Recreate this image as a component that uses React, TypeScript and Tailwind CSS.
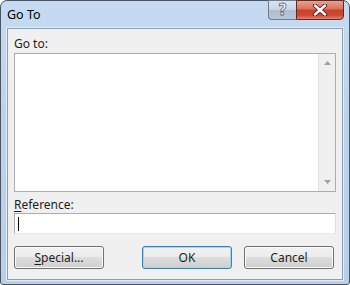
import React from "react";

const font = { fontFamily: '"Noto Sans", "Open Sans", "Liberation Sans", sans-serif' };

function WinButton({ children, isDefault = false, className = "" }: { children: React.ReactNode; isDefault?: boolean; className?: string }) {
  return (
    <div
      className={`h-[23px] rounded-[3px] border flex items-center justify-center text-[12px] text-[#1e1e1e] ${
        isDefault ? "border-[#3c7fb1] shadow-[inset_0_0_0_1px_#9fd9f3]" : "border-[#707070] shadow-[inset_0_0_0_1px_#fbfbfb]"
      } bg-[linear-gradient(to_bottom,#f2f2f2_0%,#ebebeb_50%,#dddddd_50%,#cfcfcf_100%)] ${className}`}
    >
      {children}
    </div>
  );
}

export default function App() {
  return (
    <div style={font} className="w-[350px] h-[285px] bg-white">
      <div className="w-[350px] h-[285px] rounded-t-[7px] rounded-b-[3px] border border-[#4a5564] bg-[linear-gradient(to_bottom,#c6dbf1_0%,#bcd3ec_40%,#b7cfe9_100%)] flex flex-col">
        {/* Title bar */}
        <div className="h-[27px] flex items-start relative shrink-0">
          <div className="pl-[6px] pt-[6px] text-[12.5px] text-black leading-[16px]">Go To</div>
          <div className="absolute right-[5px] top-[-1px] flex">
            <div className="w-[28px] h-[20px] rounded-bl-[4px] border border-[#6d7c8e] border-r-0 bg-[linear-gradient(to_bottom,#dbe5f0_0%,#c8d5e3_50%,#aebdd0_50%,#b9c8d9_100%)] flex items-center justify-center">
              <span className="text-[15px] font-bold leading-none text-[#f4f7fa] [-webkit-text-stroke:0.8px_#5e6b7b]" style={{ fontFamily: '"DejaVu Sans", sans-serif' }}>?</span>
            </div>
            <div className="w-[48px] h-[20px] rounded-br-[4px] border border-[#5e2a24] bg-[linear-gradient(to_bottom,#e8a193_0%,#d7705d_45%,#c4412b_50%,#cf4a33_80%,#e2826c_100%)] flex items-center justify-center">
              <svg width="16" height="12" viewBox="0 0 16 12">
                <path d="M3 1.5 L13 10.5 M13 1.5 L3 10.5" stroke="#4b1d17" strokeWidth="4.2" strokeLinecap="round" />
                <path d="M3 1.5 L13 10.5 M13 1.5 L3 10.5" stroke="#ffffff" strokeWidth="2.4" strokeLinecap="round" />
              </svg>
            </div>
          </div>
        </div>
        {/* Client area */}
        <div className="ml-[6px] mr-[6px] mb-[4px] flex-1 border border-[#8b9fb6] bg-[#f0f0f0] shadow-[0_0_0_1px_#e3edf8] flex flex-col px-[6px] pt-[7px] pb-[10px] text-[12px] text-[#1e1e1e]">
          <div className="leading-[16px] h-[17px]">Go to:</div>
          <div className="h-[139px] border border-[#abadb3] bg-white flex">
            <div className="flex-1" />
            <div className="w-[17px] bg-[#f0f0f0] border-l border-[#e3e3e3] flex flex-col items-center justify-between py-[7px]">
              <svg width="7" height="4" viewBox="0 0 7 4"><path d="M0 4 L3.5 0 L7 4 Z" fill="#a0a0a0" /></svg>
              <svg width="7" height="4" viewBox="0 0 7 4"><path d="M0 0 L3.5 4 L7 0 Z" fill="#a0a0a0" /></svg>
            </div>
          </div>
          <div className="leading-[16px] h-[16px] mt-[5px]">
            <span className="underline underline-offset-[2px]">R</span>eference:
          </div>
          <div className="h-[21px] border border-[#abadb3] border-b-[#e3e9ef] border-r-[#dbdfe6] bg-white flex items-center px-[3px]">
            <div className="w-[1px] h-[14px] bg-black" />
          </div>
          <div className="mt-[12px] flex justify-between">
            <WinButton className="w-[90px]">
              <span><span className="underline underline-offset-[2px]">S</span>pecial...</span>
            </WinButton>
            <div className="flex gap-[12px] mr-[2px]">
              <WinButton isDefault className="w-[90px]">OK</WinButton>
              <WinButton className="w-[90px]">Cancel</WinButton>
            </div>
          </div>
        </div>
      </div>
    </div>
  );
}
